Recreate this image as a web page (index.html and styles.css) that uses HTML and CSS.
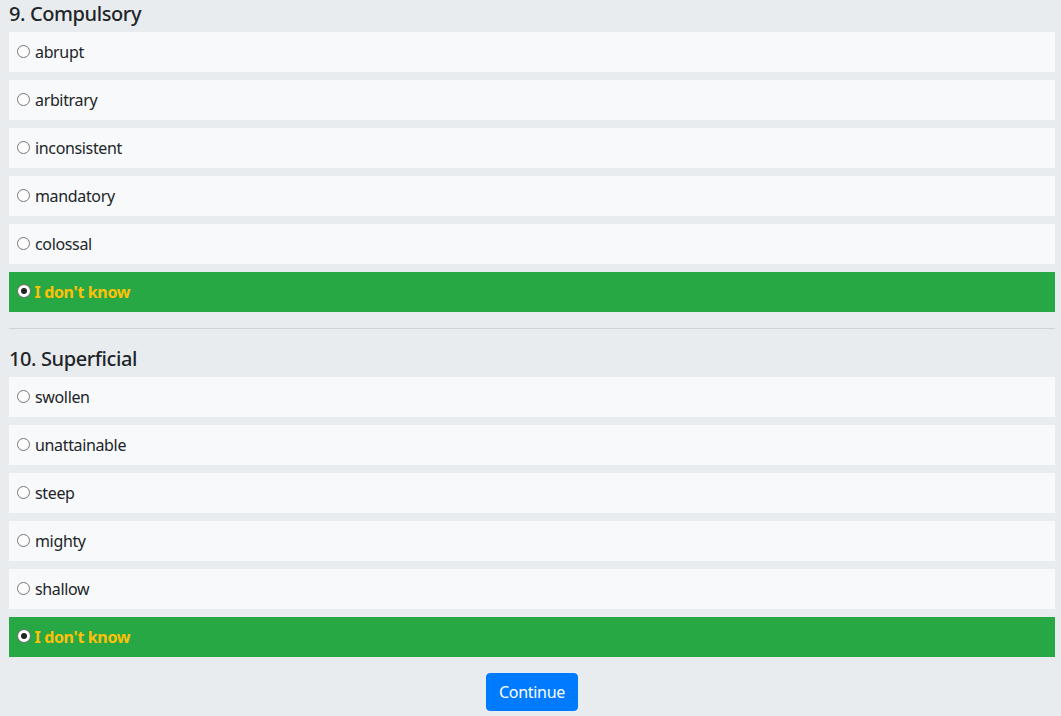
FILE: index.html
```html
<!DOCTYPE html>
<html>
<head>
<meta charset="utf-8">
<link rel="stylesheet" href="styles.css">
</head>
<body>
<div class="page">
  <section class="question">
    <h5 class="q-title">9. Compulsory</h5>
    <div class="options">
      <label class="opt"><input type="radio" name="q9"><span>abrupt</span></label>
      <label class="opt"><input type="radio" name="q9"><span>arbitrary</span></label>
      <label class="opt"><input type="radio" name="q9"><span>inconsistent</span></label>
      <label class="opt"><input type="radio" name="q9"><span>mandatory</span></label>
      <label class="opt"><input type="radio" name="q9"><span>colossal</span></label>
      <label class="opt opt-selected"><input type="radio" name="q9" checked><span>I don't know</span></label>
    </div>
  </section>
  <hr class="divider">
  <section class="question">
    <h5 class="q-title">10. Superficial</h5>
    <div class="options">
      <label class="opt"><input type="radio" name="q10"><span>swollen</span></label>
      <label class="opt"><input type="radio" name="q10"><span>unattainable</span></label>
      <label class="opt"><input type="radio" name="q10"><span>steep</span></label>
      <label class="opt"><input type="radio" name="q10"><span>mighty</span></label>
      <label class="opt"><input type="radio" name="q10"><span>shallow</span></label>
      <label class="opt opt-selected"><input type="radio" name="q10" checked><span>I don't know</span></label>
    </div>
  </section>
  <div class="actions">
    <button class="btn-continue" type="button">Continue</button>
  </div>
</div>
</body>
</html>
```
FILE: styles.css
```css
html, body {
  margin: 0;
  padding: 0;
  background: #e9ecef;
  font-family: "Noto Sans", "Open Sans", sans-serif;
  color: #212529;
}
.page {
  padding: 0 6px 0 9px;
}
.question {
  display: flex;
  flex-direction: column;
}
.q-title {
  margin: 0 0 6px 0;
  padding-top: 2px;
  font-size: 20px;
  font-weight: 500;
  line-height: 24px;
  letter-spacing: -0.4px;
}
.options {
  display: flex;
  flex-direction: column;
  gap: 8px;
}
.opt {
  display: flex;
  align-items: center;
  height: 40px;
  box-sizing: border-box;
  padding-left: 8px;
  background: #f8f9fa;
  font-size: 16px;
  letter-spacing: -0.35px;
  cursor: pointer;
}
.opt input {
  appearance: none;
  -webkit-appearance: none;
  width: 13px;
  height: 13px;
  margin: 0 5px 0 0;
  border: 1px solid #767676;
  border-radius: 50%;
  background: #fff;
  box-sizing: border-box;
  position: relative;
  top: -1px;
}
.opt input:checked {
  border: 3.5px solid #fff;
  background: #222;
  box-shadow: 0 0 0 1px #767676;
  width: 12px;
  height: 12px;
  margin-left: 0.5px;
}
.opt-selected {
  background: #28a745;
  color: #ffc107;
  font-weight: 700;
}
.divider {
  margin: 16px 0;
  border: 0;
  border-top: 1px solid rgba(0,0,0,0.1);
}
.actions {
  display: flex;
  justify-content: center;
  padding: 16px 0 5px;
}
.btn-continue {
  background: #007bff;
  color: #fff;
  border: 1px solid #007bff;
  border-radius: 4px;
  height: 38px;
  padding: 0 12px;
  font-family: inherit;
  font-size: 16px;
  line-height: 24px;
  letter-spacing: -0.3px;
}
```
